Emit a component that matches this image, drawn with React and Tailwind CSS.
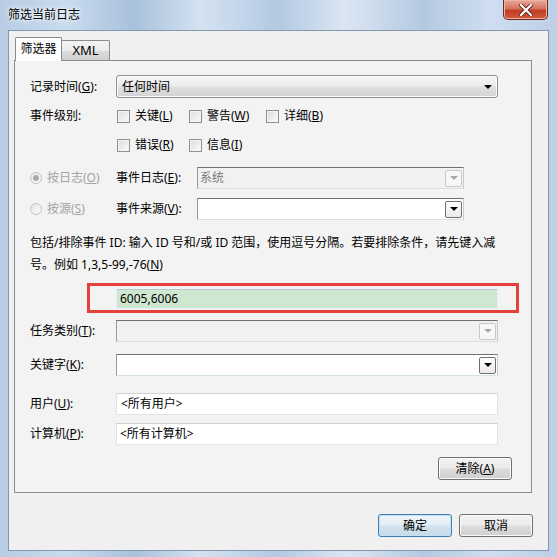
import React from "react";

const FONT = 'font-[family-name:"Noto_Sans","Noto_Sans_CJK_SC",sans-serif]';

function Tri({ gray }) {
  return (
    <span
      className={
        gray
          ? "w-0 h-0 border-l-[4px] border-r-[4px] border-t-[4px] border-l-transparent border-r-transparent border-t-[#a8a8a8]"
          : "w-0 h-0 border-l-[4px] border-r-[4px] border-t-[4px] border-l-transparent border-r-transparent border-t-black"
      }
    />
  );
}

function Combo({ w, disabled, value }) {
  return (
    <div
      className={
        (disabled ? "bg-[#f1f1f1] " : "bg-white ") +
        w +
        " h-[22px] flex items-center border border-[#c9c9c9] border-t-[#707070] border-l-[#9a9a9a] border-b-[#d3e6d3]"
      }
    >
      <span className="flex-1 pl-[2px] text-[#7a7a7a] leading-none">{value}</span>
      <span
        className={
          disabled
            ? "w-[17px] h-[17px] mr-[1px] rounded-[2px] border border-[#c8c8c8] bg-[#f7f7f7] flex items-center justify-center"
            : "w-[17px] h-[17px] mr-[1px] rounded-[2px] border border-[#707070] bg-[linear-gradient(#ffffff,#e9e9e9)] flex items-center justify-center"
        }
      >
        <Tri gray={disabled} />
      </span>
    </div>
  );
}

function Check({ children, w }) {
  return (
    <div className={w + " flex items-center pl-[1px]"}>
      <span className="w-[13px] h-[13px] border border-[#8f8f8f] bg-[linear-gradient(135deg,#dcdcdc,#fbfbfb)] shadow-[inset_0_0_0_1px_#f4f4f4] shrink-0" />
      <span className="ml-[5px] whitespace-nowrap">{children}</span>
    </div>
  );
}

function Radio({ checked, children }) {
  return (
    <div className="w-[86px] flex items-center text-[#a3a3a3] shrink-0">
      <span className="w-[12px] h-[12px] rounded-full border border-[#c2c2c2] bg-[linear-gradient(135deg,#e6e6e6,#fdfdfd)] flex items-center justify-center shrink-0">
        {checked ? <span className="w-[6px] h-[6px] rounded-full bg-[#a9a9a9]" /> : null}
      </span>
      <span className="ml-[5px] whitespace-nowrap">{children}</span>
    </div>
  );
}

function Btn({ children, primary, w }) {
  return (
    <div
      className={
        (primary
          ? "border-[#3c7fb1] bg-[linear-gradient(#f1f7fb,#e2edf5_48%,#d2e2ee_52%,#c9dbe8)] shadow-[inset_0_0_0_1px_#bfe3f8] "
          : "border-[#707070] bg-[linear-gradient(#f2f2f2,#ebebeb_48%,#dddddd_52%,#cfcfcf)] shadow-[inset_0_0_0_1px_#fbfbfb] ") +
        w +
        " h-[23px] border rounded-[3px] flex items-center justify-center"
      }
    >
      {children}
    </div>
  );
}

export default function App() {
  return (
    <div
      className={
        FONT +
        " w-[557px] h-[557px] flex flex-col text-[12px] text-black overflow-hidden bg-[linear-gradient(90deg,#b7cce3_0%,#c9dbee_12%,#a9c1dc_24%,#d4e2f1_36%,#b3c9e2_50%,#dbe6f3_62%,#b4c9e1_76%,#cfdef0_88%,#bccfe6_100%)]"
      }
    >
      {/* title bar */}
      <div className="h-[30px] shrink-0 relative flex items-center pl-[8px]">
        <span className="leading-none pb-[1px] [text-shadow:0_0_6px_#ffffff,0_0_3px_#ffffff]">筛选当前日志</span>
        <div className="absolute right-[9px] top-0 w-[45px] h-[20px] rounded-b-[5px] border border-t-0 border-[#6a2a22] bg-[linear-gradient(#e9a99b,#d6735f_45%,#c23e25_55%,#d25a3d)] flex items-center justify-center shadow-[inset_0_0_0_1px_#f0b3a6]">
          <svg width="14" height="12" viewBox="0 0 14 12">
            <path d="M2 1 L12 11 M12 1 L2 11" stroke="#5a2018" strokeWidth="4" strokeLinecap="square" />
            <path d="M2 1 L12 11 M12 1 L2 11" stroke="#ffffff" strokeWidth="2.2" strokeLinecap="square" />
          </svg>
        </div>
      </div>

      {/* client */}
      <div className="mx-[8px] mb-[6px] flex-1 bg-[#f0f0f0] border border-[#8397ad] flex flex-col">
        {/* tabs */}
        <div className="pt-[6px] pl-[6px] flex items-end relative z-10">
          <div className="w-[47px] h-[24px] bg-white border border-[#898c95] border-b-0 rounded-t-[2px] flex items-center justify-center -mb-[1px] pb-[1px]">
            筛选器
          </div>
          <div className="w-[48px] h-[20px] border border-[#898c95] border-l-0 border-b-0 rounded-tr-[2px] bg-[linear-gradient(#f3f3f3,#ebebeb_50%,#dddddd_50%,#cfcfcf)] flex items-center justify-center text-[13px]">
            XML
          </div>
        </div>

        {/* panel */}
        <div className="ml-[5px] w-[518px] h-[433px] border border-[#898c95] bg-[#f3f3f3] pt-[14px] pl-[15px] flex flex-col">
          {/* 记录时间 */}
          <div className="flex items-center h-[23px]">
            <span className="w-[86px] shrink-0">记录时间(<u>G</u>):</span>
            <div className="w-[382px] h-[23px] rounded-[3px] border border-[#8e8f8f] bg-[linear-gradient(#f6f6f6,#ececec_45%,#dfdfdf_55%,#d2d2d2)] shadow-[inset_0_0_0_1px_#fbfbfb] flex items-center pl-[5px] pr-[5px]">
              <span className="flex-1">任何时间</span>
              <Tri />
            </div>
          </div>

          {/* 事件级别 */}
          <div className="flex items-center h-[20px] mt-[8px]">
            <span className="w-[86px] shrink-0">事件级别:</span>
            <Check w="w-[72px]">
              关键(<u>L</u>)
            </Check>
            <Check w="w-[77px]">
              警告(<u>W</u>)
            </Check>
            <Check w="w-[80px]">
              详细(<u>B</u>)
            </Check>
          </div>
          <div className="flex items-center h-[20px] mt-[9px]">
            <span className="w-[86px] shrink-0" />
            <Check w="w-[72px]">
              错误(<u>R</u>)
            </Check>
            <Check w="w-[77px]">
              信息(<u>I</u>)
            </Check>
          </div>

          {/* 按日志 */}
          <div className="flex items-center h-[22px] mt-[12px]">
            <Radio checked>
              按日志(<u>O</u>)
            </Radio>
            <span className="w-[81px] shrink-0">事件日志(<u>E</u>):</span>
            <Combo w="w-[267px]" disabled value="系统" />
          </div>
          <div className="flex items-center h-[22px] mt-[9px]">
            <Radio>
              按源(<u>S</u>)
            </Radio>
            <span className="w-[81px] shrink-0">事件来源(<u>V</u>):</span>
            <Combo w="w-[267px]" value="" />
          </div>

          {/* description */}
          <div className="mt-[12px] leading-[22px] whitespace-nowrap">
            <div>包括/排除事件 ID: 输入 ID 号和/或 ID 范围，使用逗号分隔。若要排除条件，请先键入减</div>
            <div>
              号。例如 1,3,5-99,-76(<u>N</u>)
            </div>
          </div>

          {/* red highlighted input */}
          <div className="mt-[7px] ml-[57px] w-[432px] h-[30px] border-[3px] border-[#e5403c] pt-[3px] pl-[26px]">
            <div className="w-[382px] h-[20px] bg-[#cfe7d0] border border-[#e6eef5] border-t-[#b8c9d6] flex items-center pl-[3px]">
              6005,6006
            </div>
          </div>

          {/* 任务类别 */}
          <div className="flex items-center h-[22px] mt-[7px]">
            <span className="w-[86px] shrink-0">任务类别(<u>T</u>):</span>
            <Combo w="w-[382px]" disabled value="" />
          </div>
          <div className="flex items-center h-[22px] mt-[12px]">
            <span className="w-[86px] shrink-0">关键字(<u>K</u>):</span>
            <Combo w="w-[382px]" value="" />
          </div>

          {/* 用户 */}
          <div className="flex items-center h-[22px] mt-[17px]">
            <span className="w-[86px] shrink-0">用户(<u>U</u>):</span>
            <div className="w-[382px] h-[22px] bg-white border border-[#e3e3e3] border-t-[#d0d0d0] flex items-center pl-[4px]">
              &lt;所有用户&gt;
            </div>
          </div>
          <div className="flex items-center h-[22px] mt-[8px]">
            <span className="w-[86px] shrink-0">计算机(<u>P</u>):</span>
            <div className="w-[382px] h-[22px] bg-white border border-[#e3e3e3] border-t-[#d0d0d0] flex items-center pl-[3px]">
              &lt;所有计算机&gt;
            </div>
          </div>

          <div className="flex justify-end mt-[12px] pr-[19px]">
            <Btn w="w-[74px]">
              清除(<u>A</u>)
            </Btn>
          </div>
        </div>

        {/* bottom buttons */}
        <div className="flex justify-end gap-[7px] pr-[15px] mt-[21px]">
          <Btn primary w="w-[74px]">
            确定
          </Btn>
          <Btn w="w-[74px]">取消</Btn>
        </div>
      </div>
    </div>
  );
}
